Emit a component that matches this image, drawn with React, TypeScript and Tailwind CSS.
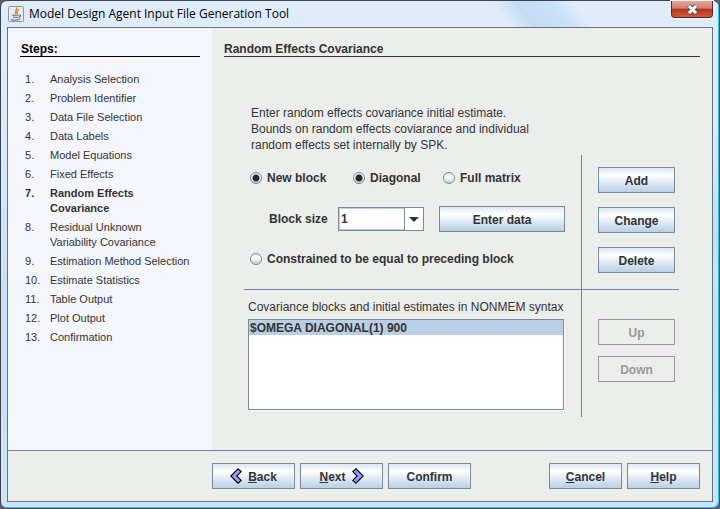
import type { ReactNode } from "react";

const steps = [
  "Analysis Selection",
  "Problem Identifier",
  "Data File Selection",
  "Data Labels",
  "Model Equations",
  "Fixed Effects",
  "Random Effects Covariance",
  "Residual Unknown Variability Covariance",
  "Estimation Method Selection",
  "Estimate Statistics",
  "Table Output",
  "Plot Output",
  "Confirmation",
];
const currentStep = 6;

function PushButton({ className = "", disabled = false, children }: { className?: string; disabled?: boolean; children: ReactNode }) {
  const look = disabled
    ? "border-[#999999] text-[#999999]"
    : "border-[#7a8a99] bg-[linear-gradient(#dde8f3_0%,#ffffff_30%,#dde8f3_62%,#b8cfe5_100%)] text-[#333333]";
  return (
    <button type="button" disabled={disabled} className={`flex h-[26px] items-center justify-center border pt-[2px] font-bold ${look} ${className}`}>
      {children}
    </button>
  );
}

function Radio({ name, label, checked = false }: { name: string; label: string; checked?: boolean }) {
  return (
    <label className="flex items-center gap-[5px] font-bold">
      <input
        type="radio"
        name={name}
        defaultChecked={checked}
        className="size-3 shrink-0 appearance-none rounded-full border border-[#7a8a99] bg-[linear-gradient(#dde8f3,#ffffff_40%,#b8cfe5)] checked:bg-[radial-gradient(circle,#2b2b2b_0_3px,transparent_4px),linear-gradient(#dde8f3,#ffffff_40%,#b8cfe5)]"
      />
      {label}
    </label>
  );
}

function Chevron({ flip = false }: { flip?: boolean }) {
  return (
    <svg width="12" height="16" viewBox="0 0 12 16" className={`-mt-[2px] ${flip ? "rotate-180" : ""}`} aria-hidden="true">
      <path d="M8 0.8 L0.8 8 L8 15.2 L11.2 12.4 L6.8 8 L11.2 3.6 Z" fill="#9999ff" stroke="#000000" strokeWidth="1.1" />
    </svg>
  );
}

export default function App() {
  return (
    <div className="min-h-screen bg-[#5b6068] font-['Liberation_Sans',Arial,sans-serif] text-[12px] leading-4 text-[#333333]">
      <div className="flex min-h-screen flex-col rounded-[7px] border border-[#3b444f] bg-[linear-gradient(50deg,transparent_0_80%,#c4dcf3_82%,#c8e0f8_85%,transparent_87%),linear-gradient(#dfecfa,#dceafa_120px,#c8dff6_60%,#cbe4f7)] px-[6px] pb-[6px] shadow-[inset_-1px_-1px_0_#2fc4ea]">
        <header className="flex h-[26px] items-start justify-between">
          <div className="flex h-[26px] items-center gap-[5px] pl-px">
            <svg width="16" height="16" viewBox="0 0 16 16" aria-hidden="true">
              <rect x="0.5" y="0.5" width="15" height="15" rx="1" fill="#e9edf0" stroke="#8d979f" />
              <path d="M8.5 1.5 C10 4 5.5 5 8 8.2 M11 3.5 C8.5 5 8.5 6 9.5 8" fill="none" stroke="#ee7a22" strokeWidth="1.4" />
              <path d="M4 9.2 h6.5 M4.8 11.2 h5.4 M2.8 13.5 C5 14.4 9.5 14.3 12 13 M11 9 c2.4 -0.4 2 2 -0.4 2.6" fill="none" stroke="#4f7088" strokeWidth="1.1" />
            </svg>
            <h1 className="font-['Open_Sans','Noto_Sans',sans-serif] text-[12px] text-black">Model Design Agent Input File Generation Tool</h1>
          </div>
          <button type="button" aria-label="Close" className="flex h-[17px] w-[42px] items-center justify-center rounded-b-[4px] border border-t-0 border-[#5a2430] bg-[linear-gradient(#e2a79b_0%,#d38171_45%,#b5331b_50%,#cc5a3c_100%)] shadow-[0_0_0_1px_#eef6fd]">
            <svg width="13" height="11" viewBox="0 0 13 11" aria-hidden="true">
              <path d="M3 2 L10 9 M10 2 L3 9" stroke="#555566" strokeWidth="5" />
              <path d="M3 2 L10 9 M10 2 L3 9" stroke="#ffffff" strokeWidth="3" />
            </svg>
          </button>
        </header>

        <div className="flex flex-1 flex-col border border-[#66737f] bg-[#eceeeb]">
          <div className="flex flex-1">
            <nav aria-label="Steps" className="w-[204px] shrink-0 bg-[#f4f6fc] px-3 pt-3">
              <h2 className="h-[17px] border-b border-black pl-px leading-[18px] font-bold text-black">Steps:</h2>
              <ol className="flex flex-col gap-1 pt-[15px] pl-[5px] text-[11px] leading-[15px]">
                {steps.map((step, i) => (
                  <li key={step} className={`flex ${i === currentStep ? "font-bold" : ""}`}>
                    <span className="w-[25px] shrink-0">{i + 1}.</span>
                    <span className={i === 6 || i === 7 ? "w-[120px]" : "whitespace-nowrap"}>{step}</span>
                  </li>
                ))}
              </ol>
            </nav>

            <main className="min-w-0 flex-1 px-3 pt-3">
              <h2 className="h-[17px] border-b border-[#333333] leading-[18px] font-bold">Random Effects Covariance</h2>
              <div className="pt-12 pr-[21px] pl-5">
                <p className="w-[300px] pl-[7px]">
                  Enter random effects covariance initial estimate.
                  <br />
                  Bounds on random effects coviarance and individual
                  <br />
                  random effects set internally by SPK.
                </p>
                <div className="mt-[2px] grid grid-cols-[minmax(0,1fr)_97px]">
                  <div className="h-[135px] border-r border-b border-[#6382bf] pt-[15px] pl-[6px]">
                    <div className="flex">
                      <div className="w-[103px]"><Radio name="block" label="New block" checked /></div>
                      <div className="w-[90px]"><Radio name="shape" label="Diagonal" checked /></div>
                      <Radio name="shape" label="Full matrix" />
                    </div>
                    <div className="flex items-center pt-5 pr-4 pl-[19px]">
                      <label htmlFor="size" className="w-[69px] font-bold">Block size</label>
                      <div className="relative h-6 w-[86px]">
                        <select id="size" className="h-6 w-full appearance-none border border-[#7a8a99] bg-white pl-[2px] font-bold shadow-[inset_0_0_0_1px_#b8cfe5]">
                          <option>1</option>
                          <option>2</option>
                          <option>3</option>
                        </select>
                        <span className="pointer-events-none absolute inset-y-px right-px flex w-[19px] items-center justify-center border-l border-[#7a8a99] bg-white">
                          <svg width="10" height="5" viewBox="0 0 10 5" aria-hidden="true"><path d="M0 0 H10 L5 5 Z" fill="#333333" /></svg>
                        </span>
                      </div>
                      <PushButton className="ml-[15px] flex-1">Enter data</PushButton>
                    </div>
                    <div className="pt-[19px]"><Radio name="block" label="Constrained to be equal to preceding block" /></div>
                  </div>
                  <div className="flex flex-col gap-[14px] border-b border-[#6382bf] pt-3 pr-1 pl-4">
                    <PushButton>Add</PushButton>
                    <PushButton>Change</PushButton>
                    <PushButton>Delete</PushButton>
                  </div>
                  <div className="h-[127px] border-r border-[#6382bf] pt-[9px] pr-[17px] pl-1">
                    <p id="blocks-label" className="whitespace-nowrap">Covariance blocks and initial estimates in NONMEM syntax</p>
                    <div role="listbox" aria-labelledby="blocks-label" className="mt-1 h-[91px] border border-[#7a8a99] bg-white shadow-[1px_1px_0_#ffffff]">
                      <div role="option" aria-selected="true" className="h-[15px] bg-[#b8cfe5] pl-px leading-[17px] font-bold">$OMEGA DIAGONAL(1) 900</div>
                    </div>
                  </div>
                  <div className="flex flex-col gap-[11px] pt-[29px] pr-1 pl-4">
                    <PushButton disabled>Up</PushButton>
                    <PushButton disabled>Down</PushButton>
                  </div>
                </div>
              </div>
            </main>
          </div>

          <footer className="flex gap-[5px] border-t border-[#6382bf] py-3 pr-3 pl-[204px]">
            <PushButton className="w-[83px] gap-[6px]"><Chevron /><span><u>B</u>ack</span></PushButton>
            <PushButton className="w-[83px] gap-[6px]"><span><u>N</u>ext</span><Chevron flip /></PushButton>
            <PushButton className="w-[83px]">Confirm</PushButton>
            <PushButton className="ml-auto w-[73px]"><span><u>C</u>ancel</span></PushButton>
            <PushButton className="w-[73px]"><span><u>H</u>elp</span></PushButton>
          </footer>
        </div>
      </div>
    </div>
  );
}
